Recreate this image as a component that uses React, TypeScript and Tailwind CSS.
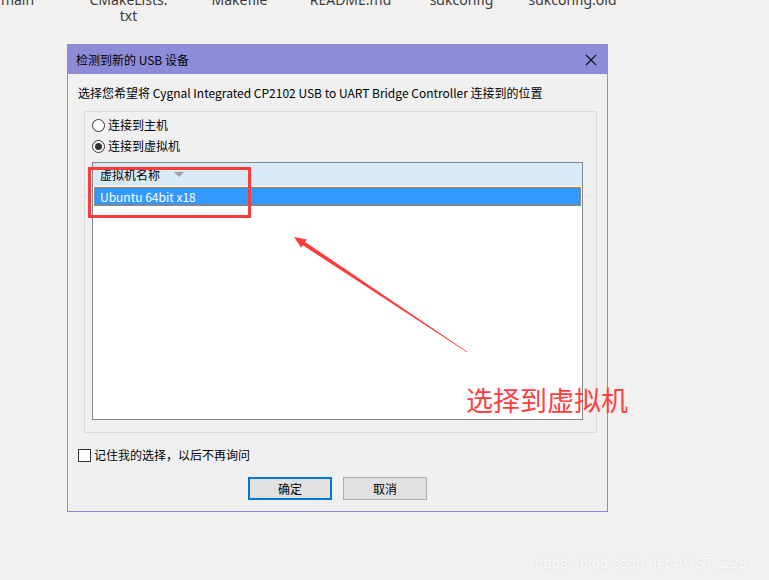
import React from "react";

const ui = "font-['Noto_Sans_CJK_SC','Noto_Sans',sans-serif]";

const files = [
  ["main"],
  ["CMakeLists.", "txt"],
  ["Makefile"],
  ["README.md"],
  ["sdkconfig"],
  ["sdkconfig.old"],
];

function Radio({ checked, label }: { checked?: boolean; label: string }) {
  return (
    <div className="flex h-[16px] items-center gap-[3px]">
      <span className="flex h-[13px] w-[13px] items-center justify-center rounded-full border border-[#333] bg-white">
        {checked && <span className="h-[7px] w-[7px] rounded-full bg-[#333]" />}
      </span>
      <span className="text-[12px] leading-[16px] text-black">{label}</span>
    </div>
  );
}

export default function App() {
  return (
    <div className="relative h-[580px] w-[769px] overflow-hidden bg-[#f2f1f0]">
      {/* desktop file labels (cut off at top) */}
      <div className="-ml-[38px] -mt-[8px] flex h-[24px] font-['Noto_Sans',sans-serif] text-[14px] leading-[16px] text-[#3c3c3c]">
        {files.map((f) => (
          <div key={f[0]} className="flex w-[111px] shrink-0 flex-col items-center">
            {f.map((l) => (
              <span key={l} className="h-[16px]">
                {l}
              </span>
            ))}
          </div>
        ))}
      </div>

      {/* dialog */}
      <div className={`ml-[67px] mt-[28px] w-[541px] border border-[#8e8cd8] bg-[#f0f0f0] ${ui}`}>
        <div className="flex h-[29px] items-center justify-between bg-[#8e8cd8] pl-[8px] pr-[10px]">
          <span className="text-[12px] text-black">检测到新的 USB 设备</span>
          <svg width="12" height="12" viewBox="0 0 12 12">
            <path d="M1 1L11 11M11 1L1 11" stroke="#111" strokeWidth="1.1" />
          </svg>
        </div>

        <div className="flex flex-col px-[10px] pb-[11px] pt-[11px]">
          <p className="h-[16px] text-[12px] leading-[16px] text-black">
            选择您希望将 Cygnal Integrated CP2102 USB to UART Bridge Controller 连接到的位置
          </p>

          {/* group box */}
          <div className="ml-[6px] mt-[10px] flex flex-col border border-[#dcdcdc] pb-[12px] pl-[7px] pr-[13px] pt-[5px]">
            <Radio label="连接到主机" />
            <div className="mt-[5px]">
              <Radio checked label="连接到虚拟机" />
            </div>

            {/* list view */}
            <div className="mt-[8px] flex h-[258px] flex-col border border-[#828790] bg-white">
              <div className="flex h-[23px] items-center gap-[14px] bg-[#d9eaf7] pl-[7px]">
                <span className="text-[12px] text-black">虚拟机名称</span>
                <span className="h-0 w-0 border-x-[5px] border-t-[5px] border-x-transparent border-t-[#a0a0a0]" />
              </div>
              <div className="mx-[1px] mt-[1px] flex h-[19px] items-center border border-dotted border-[#c87a3a] bg-[#3399ff] pl-[5px]">
                <span className="text-[12px] text-white">Ubuntu 64bit x18</span>
              </div>
            </div>
          </div>

          <div className="mt-[14px] flex h-[16px] items-center gap-[3px]">
            <span className="h-[13px] w-[13px] border border-[#333] bg-white" />
            <span className="text-[12px] text-black">记住我的选择，以后不再询问</span>
          </div>

          <div className="mt-[14px] flex justify-center gap-[11px]">
            <button className="h-[23px] w-[84px] border-2 border-[#0078d7] bg-[#e1e1e1] text-[12px] text-black">
              确定
            </button>
            <button className="h-[23px] w-[84px] border border-[#adadad] bg-[#e1e1e1] text-[12px] text-black">
              取消
            </button>
          </div>
        </div>
      </div>

      {/* annotations */}
      <div className="absolute left-[88px] top-[167px] h-[51px] w-[163px] border-[3px] border-[#ff3b3b]" />
      <svg className="absolute left-0 top-0" width="769" height="580">
        <polygon
          points="467.2,351.8 305.1,241.9 306.8,239.4 294,237 301.2,247.8 302.9,245.3 466.8,352.2"
          fill="#ff3b3b"
        />
      </svg>
      <span className={`absolute left-[466px] top-[382px] text-[27px] leading-[36px] text-[#ff4040] ${ui}`}>
        选择到虚拟机
      </span>

      <span className="absolute left-[535px] top-[552px] font-['Liberation_Sans',sans-serif] text-[15px] text-[#fbfbfb] [text-shadow:0_0_2px_rgba(0,0,0,0.12)]">
        https://blog.csdn.net/AUST_129
      </span>
    </div>
  );
}
